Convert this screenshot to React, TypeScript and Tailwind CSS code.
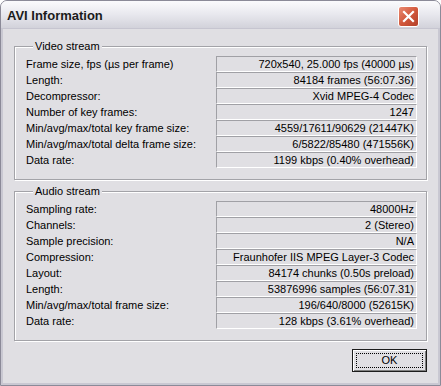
import React from "react";

const video: [string, string][] = [
  ["Frame size, fps (µs per frame)", "720x540, 25.000 fps (40000 µs)"],
  ["Length:", "84184 frames (56:07.36)"],
  ["Decompressor:", "Xvid MPEG-4 Codec"],
  ["Number of key frames:", "1247"],
  ["Min/avg/max/total key frame size:", "4559/17611/90629 (21447K)"],
  ["Min/avg/max/total delta frame size:", "6/5822/85480 (471556K)"],
  ["Data rate:", "1199 kbps (0.40% overhead)"],
];

const audio: [string, string][] = [
  ["Sampling rate:", "48000Hz"],
  ["Channels:", "2 (Stereo)"],
  ["Sample precision:", "N/A"],
  ["Compression:", "Fraunhofer IIS MPEG Layer-3 Codec"],
  ["Layout:", "84174 chunks (0.50s preload)"],
  ["Length:", "53876996 samples (56:07.31)"],
  ["Min/avg/max/total frame size:", "196/640/8000 (52615K)"],
  ["Data rate:", "128 kbps (3.61% overhead)"],
];

function Group({ title, rows }: { title: string; rows: [string, string][] }) {
  return (
    <fieldset className="border border-[#a3a3a8] shadow-[inset_1px_1px_0_#fff,1px_1px_0_#fff] pl-[11px] pr-[9px] pt-[3px] pb-[11px]">
      <legend className="ml-[7px] px-[2px] bg-[#e0dfe3] leading-[13px]">{title}</legend>
      <div className="flex flex-col">
        {rows.map(([label, value], i) => (
          <div key={i} className="flex items-center h-[16px]">
            <span className="flex-1 whitespace-nowrap">{label}</span>
            <span className="w-[201px] h-[16px] border-t border-l border-[#a0a0a5] border-b-white border-r-white border-b border-r text-right pr-[2px] leading-[14px] whitespace-nowrap">
              {value}
            </span>
          </div>
        ))}
      </div>
    </fieldset>
  );
}

export default function App() {
  return (
    <div className="w-[441px] h-[386px] flex flex-col rounded-t-[7px] border border-[#8b8a98] bg-[#e0dfe3] overflow-hidden font-['Liberation_Sans',Arial,sans-serif] text-[11px] text-black">
      <div className="h-[28px] shrink-0 flex items-center justify-between pl-[6px] pr-[23px] bg-gradient-to-b from-[#fbfbfd] via-[#e8e8ee] to-[#d2d2da] border-b border-[#c6c5d0]">
        <span className="font-bold text-[13px] text-[#1b1b1b] mt-[2px]">AVI Information</span>
        <div className="w-[21px] h-[21px] mt-[3px] mr-[-2px] rounded-[3px] border border-white bg-gradient-to-br from-[#e98a72] via-[#d2583c] to-[#b3402a] flex items-center justify-center">
          <svg width="13" height="13" viewBox="0 0 13 13">
            <path d="M2 2 L11 11 M11 2 L2 11" stroke="#fff" strokeWidth="2.2" strokeLinecap="square" />
          </svg>
        </div>
      </div>
      <div className="flex-1 flex flex-col border-x-[2px] border-b-[2px] border-[#c9c8d2] px-[11px] pt-[11px]">
        <Group title="Video stream" rows={video} />
        <div className="h-[5px]" />
        <Group title="Audio stream" rows={audio} />
        <div className="flex justify-end mt-[8px]">
          <button className="w-[75px] h-[23px] border border-[#1c1c1c] bg-[#e0dfe3] shadow-[inset_1px_1px_0_#fff,inset_-1px_-1px_0_#808080] p-[3px]">
            <div className="w-full h-full border border-dotted border-black flex items-center justify-center">OK</div>
          </button>
        </div>
      </div>
    </div>
  );
}
